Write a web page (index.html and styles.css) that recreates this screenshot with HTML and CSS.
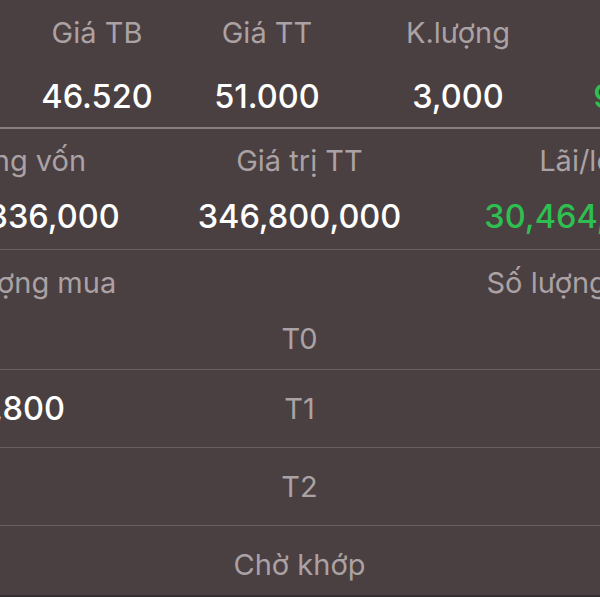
FILE: index.html
```html
<!DOCTYPE html>
<html lang="vi">
<head>
<meta charset="utf-8">
<title>Danh mục</title>
<link rel="stylesheet" href="styles.css">
</head>
<body>
<div class="panel">
  <div class="inner">
    <div class="summary">
      <div class="cell"><span class="label">Mã CK</span><span class="value">HPG</span></div>
      <div class="cell"><span class="label">Giá TB</span><span class="value">46.520</span></div>
      <div class="cell"><span class="label">Giá TT</span><span class="value">51.000</span></div>
      <div class="cell"><span class="label">K.lượng</span><span class="value">3,000</span></div>
      <div class="cell"><span class="label">%</span><span class="value up">9.63%</span></div>
    </div>
    <div class="totals">
      <div class="cell"><span class="label">Tổng vốn</span><span class="value">316,336,000</span></div>
      <div class="cell"><span class="label">Giá trị TT</span><span class="value">346,800,000</span></div>
      <div class="cell"><span class="label">Lãi/lỗ</span><span class="value up">30,464,000</span></div>
    </div>
    <div class="head">
      <span class="label">Số lượng mua</span>
      <span></span>
      <span class="label">Số lượng bán</span>
    </div>
    <div class="trow first">
      <span class="value"></span>
      <span class="status">T0</span>
      <span class="value"></span>
    </div>
    <div class="trow">
      <span class="value">1,800</span>
      <span class="status">T1</span>
      <span class="value"></span>
    </div>
    <div class="trow">
      <span class="value"></span>
      <span class="status">T2</span>
      <span class="value"></span>
    </div>
    <div class="trow last">
      <span class="value"></span>
      <span class="status">Chờ khớp</span>
      <span class="value"></span>
    </div>
  </div>
</div>
</body>
</html>
```
FILE: styles.css
```css
html, body {
  margin: 0;
  padding: 0;
  background: #ffffff;
  overflow: hidden;
}
body {
  font-family: Inter, "Noto Sans", sans-serif;
  width: 600px;
  height: 600px;
}
.panel {
  height: 595px;
  background: #4a3f41;
  border-bottom: 2px solid #362e30;
  overflow: hidden;
}
.inner {
  width: 832px;
  margin-left: -116px;
}
.label {
  font-size: 29px;
  line-height: 36px;
  color: #aaa2a4;
  white-space: nowrap;
}
.value {
  font-size: 32.5px;
  line-height: 40px;
  font-weight: 500;
  color: #ffffff;
  white-space: nowrap;
}
.value.up {
  color: #2fbf50;
}
.cell {
  display: flex;
  flex-direction: column;
  align-items: center;
}
.summary {
  display: grid;
  grid-template-columns: 128px 170px 170px 212px 160px;
  height: 127px;
  border-bottom: 2px solid #877e81;
}
.summary .cell {
  padding-top: 15px;
  gap: 26px;
}
.totals {
  display: grid;
  grid-template-columns: repeat(3, 277px);
  height: 120px;
  border-bottom: 1px solid #675e60;
}
.totals .cell {
  padding-top: 14px;
  gap: 18px;
}
.head {
  display: grid;
  grid-template-columns: repeat(3, 277px);
  justify-items: center;
  padding-top: 15px;
  height: 43px;
}
.trow {
  display: grid;
  grid-template-columns: repeat(3, 277px);
  justify-items: center;
  align-items: center;
  height: 77px;
  border-bottom: 1px solid #675e60;
}
.trow.first {
  height: 61px;
}
.trow.last {
  border-bottom: none;
}
.status {
  font-size: 29px;
  line-height: 36px;
  color: #aaa2a4;
  white-space: nowrap;
}
```
